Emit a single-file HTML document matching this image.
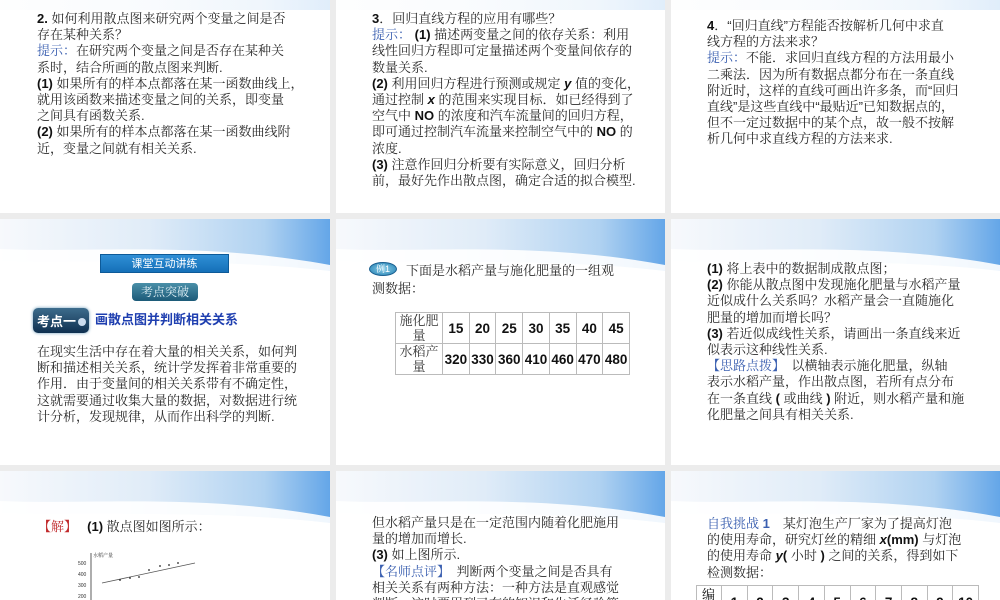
<!DOCTYPE html>
<html><head><meta charset="utf-8">
<style>
*{margin:0;padding:0;box-sizing:border-box}
body{width:1000px;height:600px;background:#ececec;position:relative;overflow:hidden;font-family:"Liberation Sans","Noto Serif CJK SC","Noto Sans CJK SC",serif;color:#222}
.s{position:absolute;background:#fff;overflow:hidden}
.t{position:absolute;font-size:13px;line-height:16.2px;white-space:nowrap;color:#2a2a2a}
.b{font-weight:bold;color:#111;font-family:"Liberation Sans",sans-serif}
.bl{color:#3a5fb0}
.hd{position:absolute;left:0;top:0}
table{border-collapse:collapse;position:absolute;font-size:13.5px}
td{border:1px solid #bbb;text-align:center;font-family:"Liberation Sans",sans-serif;font-weight:bold;color:#111}
td.c{font-weight:normal;font-family:"Liberation Sans","Noto Serif CJK SC",serif;line-height:15px;color:#333;font-size:13px}
</style></head><body>
<svg width="0" height="0" style="position:absolute"><defs>
<linearGradient id="g" x1="0" x2="1" y1="0" y2="0"><stop offset="0" stop-color="#f7f9fc"/><stop offset=".45" stop-color="#e0ecf8"/><stop offset=".8" stop-color="#b0d2f1"/><stop offset="1" stop-color="#64a6e8"/></linearGradient>
</defs></svg>

<!-- Row 1 -->
<div class="s" style="left:0;top:0;width:330px;height:213px">
<svg class="hd" width="330" height="10"><rect width="330" height="10" fill="url(#g)" opacity=".2"/></svg>
<div class="t" style="left:37px;top:11px"><span class="b">2.</span> 如何利用散点图来研究两个变量之间是否<br>存在某种关系？<br><span class="bl">提示：</span>在研究两个变量之间是否存在某种关<br>系时，结合所画的散点图来判断.<br><span class="b">(1)</span> 如果所有的样本点都落在某一函数曲线上，<br>就用该函数来描述变量之间的关系，即变量<br>之间具有函数关系.<br><span class="b">(2)</span> 如果所有的样本点都落在某一函数曲线附<br>近，变量之间就有相关关系.</div>
</div>
<div class="s" style="left:336px;top:0;width:329px;height:213px">
<svg class="hd" width="329" height="10"><rect width="329" height="10" fill="url(#g)" opacity=".2"/></svg>
<div class="t" style="left:36px;top:11px"><span class="b">3</span>．回归直线方程的应用有哪些？<br><span class="bl">提示：</span> <span class="b">(1)</span> 描述两变量之间的依存关系：利用<br>线性回归方程即可定量描述两个变量间依存的<br>数量关系.<br><span class="b">(2)</span> 利用回归方程进行预测或规定 <i class="b">y</i> 值的变化，<br>通过控制 <i class="b">x</i> 的范围来实现目标．如已经得到了<br>空气中 <span class="b">NO</span> 的浓度和汽车流量间的回归方程，<br>即可通过控制汽车流量来控制空气中的 <span class="b">NO</span> 的<br>浓度.<br><span class="b">(3)</span> 注意作回归分析要有实际意义，回归分析<br>前，最好先作出散点图，确定合适的拟合模型.</div>
</div>
<div class="s" style="left:671px;top:0;width:329px;height:213px">
<svg class="hd" width="329" height="10"><rect width="329" height="10" fill="url(#g)" opacity=".2"/></svg>
<div class="t" style="left:36px;top:18px"><span class="b">4</span>．“回归直线”方程能否按解析几何中求直<br>线方程的方法来求？<br><span class="bl">提示：</span>不能．求回归直线方程的方法用最小<br>二乘法．因为所有数据点都分布在一条直线<br>附近时，这样的直线可画出许多条，而“回归<br>直线”是这些直线中“最贴近”已知数据点的，<br>但不一定过数据中的某个点，故一般不按解<br>析几何中求直线方程的方法来求.</div>
</div>

<!-- Row 2 -->
<div class="s" style="left:0;top:219px;width:330px;height:246px">
<svg class="hd" width="330" height="60"><rect width="330" height="60" fill="url(#g)"/><path d="M0,30 C90,34 200,22 330,46 L330,60 L0,60Z" fill="#fff" opacity=".9"/><path d="M0,42 C120,44 230,40 330,52 L330,60 L0,60Z" fill="#fff"/></svg>
<div style="position:absolute;left:100px;top:35px;width:129px;height:19px;background:linear-gradient(#2f8fd6,#1570b8);border:1px solid #0d5a98;color:#fff;font-size:11px;line-height:17px;text-align:center;font-family:'Noto Sans CJK SC',sans-serif">课堂互动讲练</div>
<div style="position:absolute;left:132px;top:64px;width:66px;height:18px;background:linear-gradient(#4a8fa8,#1c5a78);border-radius:4px;color:#dfeff5;font-size:12px;line-height:18px;text-align:center">考点突破</div>
<div style="position:absolute;left:33px;top:89px;width:56px;height:25px;background:linear-gradient(#3d6c8c,#0f3050);border-radius:5px;color:#fff;font-size:13px;font-weight:bold;line-height:25px;padding-left:4px;font-family:'Noto Sans CJK SC',sans-serif;box-shadow:0 0 3px #6a9ab8">考点一<span style="display:inline-block;width:8px;height:8px;border-radius:50%;background:#cde;margin-left:2px"></span></div>
<div class="t" style="left:95px;top:92px;color:#1f3fb0;font-weight:bold;font-family:'Noto Sans CJK SC',sans-serif">画散点图并判断相关关系</div>
<div class="t" style="left:37px;top:125px">在现实生活中存在着大量的相关关系，如何判<br>断和描述相关关系，统计学发挥着非常重要的<br>作用．由于变量间的相关关系带有不确定性，<br>这就需要通过收集大量的数据，对数据进行统<br>计分析，发现规律，从而作出科学的判断.</div>
</div>
<div class="s" style="left:336px;top:219px;width:329px;height:246px">
<svg class="hd" width="329" height="60"><rect width="329" height="60" fill="url(#g)"/><path d="M0,30 C90,34 200,22 329,46 L329,60 L0,60Z" fill="#fff" opacity=".9"/><path d="M0,42 C120,44 230,40 329,52 L329,60 L0,60Z" fill="#fff"/></svg>
<div style="position:absolute;left:33px;top:43px;width:28px;height:14px;border-radius:50%;background:radial-gradient(#8fd0ea,#1e7db0);border:1px solid #1a5f90;color:#fff;font-size:9px;line-height:12px;text-align:center">例1</div>
<div class="t" style="left:70px;top:44px">下面是水稻产量与施化肥量的一组观</div>
<div class="t" style="left:36px;top:62px">测数据：</div>
<table style="left:59px;top:93px;width:235px;height:62px">
<tr><td class="c" style="width:47px">施化肥<br>量</td><td>15</td><td>20</td><td>25</td><td>30</td><td>35</td><td>40</td><td>45</td></tr>
<tr><td class="c">水稻产<br>量</td><td>320</td><td>330</td><td>360</td><td>410</td><td>460</td><td>470</td><td>480</td></tr>
</table>
</div>
<div class="s" style="left:671px;top:219px;width:329px;height:246px">
<svg class="hd" width="329" height="60"><rect width="329" height="60" fill="url(#g)"/><path d="M0,30 C90,34 200,22 329,46 L329,60 L0,60Z" fill="#fff" opacity=".9"/><path d="M0,42 C120,44 230,40 329,52 L329,60 L0,60Z" fill="#fff"/></svg>
<div class="t" style="left:36px;top:42px"><span class="b">(1)</span> 将上表中的数据制成散点图；<br><span class="b">(2)</span> 你能从散点图中发现施化肥量与水稻产量<br>近似成什么关系吗？水稻产量会一直随施化<br>肥量的增加而增长吗？<br><span class="b">(3)</span> 若近似成线性关系，请画出一条直线来近<br>似表示这种线性关系.<br><span class="bl">【思路点拨】</span>　以横轴表示施化肥量，纵轴<br>表示水稻产量，作出散点图，若所有点分布<br>在一条直线 <span class="b">(</span> 或曲线 <span class="b">)</span> 附近，则水稻产量和施<br>化肥量之间具有相关关系.</div>
</div>

<!-- Row 3 -->
<div class="s" style="left:0;top:471px;width:330px;height:129px">
<svg class="hd" width="330" height="60"><rect width="330" height="60" fill="url(#g)"/><path d="M0,30 C90,34 200,22 330,46 L330,60 L0,60Z" fill="#fff" opacity=".9"/><path d="M0,42 C120,44 230,40 330,52 L330,60 L0,60Z" fill="#fff"/></svg>
<div class="t" style="left:38px;top:48px"><span style="color:#c0282a">【解】</span>　 <span class="b">(1)</span> 散点图如图所示：</div>
<svg style="position:absolute;left:70px;top:80px" width="140" height="49">
<line x1="21" y1="2" x2="21" y2="49" stroke="#333" stroke-width=".8"/>
<text x="23" y="6" font-size="5" fill="#333">水稻产量</text>
<g font-size="5" fill="#333"><text x="8" y="14">500</text><text x="8" y="25">400</text><text x="8" y="36">300</text><text x="8" y="47">200</text></g>
<line x1="32" y1="32" x2="125" y2="12" stroke="#555" stroke-width=".8"/>
<g fill="#222"><circle cx="50" cy="29" r=".9"/><circle cx="60" cy="27" r=".9"/><circle cx="69" cy="26" r=".9"/><circle cx="79" cy="19" r=".9"/><circle cx="90" cy="15" r=".9"/><circle cx="99" cy="14" r=".9"/><circle cx="108" cy="12" r=".9"/></g>
</svg>
</div>
<div class="s" style="left:336px;top:471px;width:329px;height:129px">
<svg class="hd" width="329" height="60"><rect width="329" height="60" fill="url(#g)"/><path d="M0,30 C90,34 200,22 329,46 L329,60 L0,60Z" fill="#fff" opacity=".9"/><path d="M0,42 C120,44 230,40 329,52 L329,60 L0,60Z" fill="#fff"/></svg>
<div class="t" style="left:36px;top:44px">但水稻产量只是在一定范围内随着化肥施用<br>量的增加而增长.<br><span class="b">(3)</span> 如上图所示.<br><span class="bl">【名师点评】</span>　判断两个变量之间是否具有<br>相关关系有两种方法：一种方法是直观感觉<br>判断，这时要用到已有的知识和生活经验等</div>
</div>
<div class="s" style="left:671px;top:471px;width:329px;height:129px">
<svg class="hd" width="329" height="60"><rect width="329" height="60" fill="url(#g)"/><path d="M0,30 C90,34 200,22 329,46 L329,60 L0,60Z" fill="#fff" opacity=".9"/><path d="M0,42 C120,44 230,40 329,52 L329,60 L0,60Z" fill="#fff"/></svg>
<div class="t" style="left:36px;top:45px"><span class="bl">自我挑战 <span style="font-family:'Liberation Sans';font-weight:bold">1</span></span>　某灯泡生产厂家为了提高灯泡<br>的使用寿命，研究灯丝的精细 <i class="b">x</i><span class="b">(mm)</span> 与灯泡<br>的使用寿命 <i class="b">y</i><span class="b">(</span> 小时 <span class="b">)</span> 之间的关系，得到如下<br>检测数据：</div>
<div style="position:absolute;left:25px;top:114px;width:283px;height:30px;border:1px solid #bbb;border-right:none"></div>
<div style="position:absolute;left:25px;top:114px;width:283px;display:flex;font-family:'Liberation Sans',sans-serif;font-weight:bold;font-size:13.5px;color:#111">
<div style="width:26px;border-right:1px solid #bbb;height:30px;text-align:center;font-weight:normal;font-family:'Noto Serif CJK SC',serif;font-size:13px;line-height:15px;padding-top:1px">编</div>
<div style="flex:1;border-right:1px solid #bbb;height:30px;text-align:center;padding-top:10px">1</div>
<div style="flex:1;border-right:1px solid #bbb;height:30px;text-align:center;padding-top:10px">2</div>
<div style="flex:1;border-right:1px solid #bbb;height:30px;text-align:center;padding-top:10px">3</div>
<div style="flex:1;border-right:1px solid #bbb;height:30px;text-align:center;padding-top:10px">4</div>
<div style="flex:1;border-right:1px solid #bbb;height:30px;text-align:center;padding-top:10px">5</div>
<div style="flex:1;border-right:1px solid #bbb;height:30px;text-align:center;padding-top:10px">6</div>
<div style="flex:1;border-right:1px solid #bbb;height:30px;text-align:center;padding-top:10px">7</div>
<div style="flex:1;border-right:1px solid #bbb;height:30px;text-align:center;padding-top:10px">8</div>
<div style="flex:1;border-right:1px solid #bbb;height:30px;text-align:center;padding-top:10px">9</div>
<div style="flex:1;border-right:1px solid #bbb;height:30px;text-align:center;padding-top:10px">10</div>
</div>
</div>
</body></html>
